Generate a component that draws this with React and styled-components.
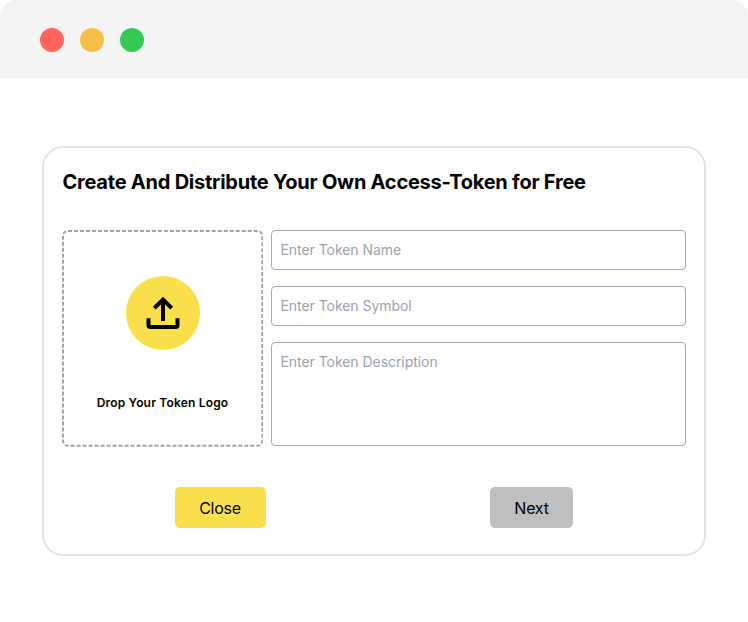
import React from "react";
import styled, { createGlobalStyle } from "styled-components";

const GlobalStyle = createGlobalStyle`
  *, *::before { box-sizing: border-box; }
  body {
    margin: 0;
    background: #fff;
    color: #000;
    font-family: Inter, "Liberation Sans", sans-serif;
    -webkit-font-smoothing: antialiased;
  }
`;

const Window = styled.div`
  height: 622px;
  overflow: hidden;
  background: #fff;
`;

const TitleBar = styled.header`
  display: flex;
  align-items: center;
  gap: 16px;
  height: 78px;
  padding: 2px 40px 0;
  background: #f4f4f4;
  border-radius: 16px 16px 0 0;
`;

const WindowDot = styled.span`
  width: 24px;
  height: 24px;
  border-radius: 50%;
  background: ${(p) => p.$color};
`;

const Card = styled.form`
  width: 664px;
  height: 410px;
  margin: 68px 0 0 42px;
  padding: 20px 18.5px 0 18px;
  border: 2px solid #e3e3e3;
  border-radius: 21px;
`;

const Title = styled.h1`
  margin: 0;
  padding-left: 0.5px;
  font-size: 20px;
  line-height: 28px;
  font-weight: 700;
  letter-spacing: -0.23px;
  white-space: nowrap;
`;

const Fields = styled.div`
  display: grid;
  grid-template-columns: 201px 1fr;
  column-gap: 8px;
  height: 216.5px;
  margin-top: 34px;
`;

/* The outline is drawn at 150% and scaled back, which gives a 2px line with short dashes. */
const DropZone = styled.div`
  position: relative;
  display: flex;
  flex-direction: column;
  align-items: center;
  padding-top: 46px;
  &::before {
    content: "";
    position: absolute;
    top: 0;
    left: 0;
    width: 150%;
    height: 150%;
    border: 3px dashed #9ca3af;
    border-radius: 9px;
    transform: scale(0.66667);
    transform-origin: 0 0;
    pointer-events: none;
  }
`;

const UploadBadge = styled.div`
  display: flex;
  align-items: center;
  justify-content: center;
  width: 74px;
  height: 73.5px;
  border-radius: 50%;
  background: #fae04d;
`;

const DropLabel = styled.span`
  margin-top: 45.5px;
  font-size: 12px;
  line-height: 16px;
  font-weight: 600;
  letter-spacing: 0.18px;
  white-space: nowrap;
`;

const Inputs = styled.div`
  display: grid;
  grid-template-rows: 40px 40px 1fr;
  row-gap: 16px;
`;

const TextInput = styled.input`
  width: 100%;
  min-width: 0;
  margin: 0;
  padding: 0 8.5px;
  border: 1px solid #a4a9b8;
  border-radius: 4px;
  outline: none;
  background: #fff;
  font: 400 14px/20px Inter, "Liberation Sans", sans-serif;
  letter-spacing: -0.05px;
  &::placeholder { color: #9ca3af; opacity: 1; }
`;

const TextArea = styled(TextInput).attrs({ as: "textarea" })`
  height: 104px;
  padding-top: 9px;
  resize: none;
`;

const Actions = styled.div`
  display: flex;
  justify-content: space-between;
  margin-top: 40.5px;
  padding: 0 112.5px 0 113px;
`;

const Button = styled.button`
  width: ${(p) => p.$width};
  height: 41px;
  padding: 0 ${(p) => p.$inset || "0"} 0 0;
  border: 0;
  border-radius: 5px;
  background: ${(p) => p.$color};
  color: #000;
  font: 400 16px/24px Inter, "Liberation Sans", sans-serif;
  letter-spacing: -0.25px;
`;

const UploadIcon = () => (
  <svg width="34" height="34" viewBox="0 0 34 34" fill="none" stroke="#000" strokeWidth="4" aria-hidden="true">
    <path d="M17 25V3.5M8.3 12.2L17 3.5L25.7 12.2" />
    <path d="M2.5 22.2V29.2Q2.5 31 4.3 31H29.7Q31.5 31 31.5 29.2V22.2" />
  </svg>
);

export default function App() {
  return (
    <Window>
      <GlobalStyle />
      <TitleBar>
        <WindowDot $color="#ff645d" />
        <WindowDot $color="#f6bf46" />
        <WindowDot $color="#36c855" />
      </TitleBar>
      <Card>
        <Title>Create And Distribute Your Own Access-Token for Free</Title>
        <Fields>
          <DropZone>
            <UploadBadge>
              <UploadIcon />
            </UploadBadge>
            <DropLabel>Drop Your Token Logo</DropLabel>
          </DropZone>
          <Inputs>
            <TextInput placeholder="Enter Token Name" />
            <TextInput placeholder="Enter Token Symbol" />
            <TextArea placeholder="Enter Token Description" />
          </Inputs>
        </Fields>
        <Actions>
          <Button type="button" $color="#fae04d" $width="91px" $inset="1px">Close</Button>
          <Button type="button" $color="#bfbfbf" $width="83px">Next</Button>
        </Actions>
      </Card>
    </Window>
  );
}
